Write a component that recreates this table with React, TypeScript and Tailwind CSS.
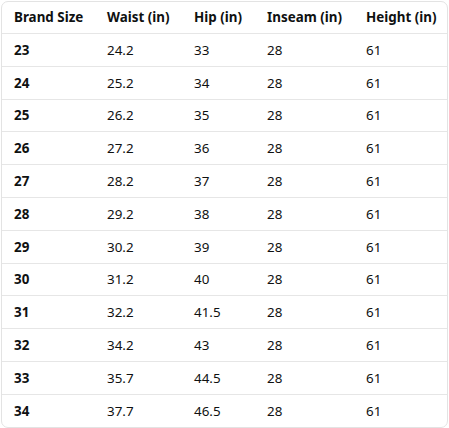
const rows: [string, string, string, string, string][] = [
  ["23", "24.2", "33", "28", "61"],
  ["24", "25.2", "34", "28", "61"],
  ["25", "26.2", "35", "28", "61"],
  ["26", "27.2", "36", "28", "61"],
  ["27", "28.2", "37", "28", "61"],
  ["28", "29.2", "38", "28", "61"],
  ["29", "30.2", "39", "28", "61"],
  ["30", "31.2", "40", "28", "61"],
  ["31", "32.2", "41.5", "28", "61"],
  ["32", "34.2", "43", "28", "61"],
  ["33", "35.7", "44.5", "28", "61"],
  ["34", "37.7", "46.5", "28", "61"],
];

const headers = ["Brand Size", "Waist (in)", "Hip (in)", "Inseam (in)", "Height (in)"];

export default function App() {
  return (
    <div className="w-[449px] h-[428px] bg-white p-px font-['Noto_Sans','Open_Sans',sans-serif] text-[13.4px] text-[#0f1111]">
      <div className="w-[447px] h-[427px] rounded-[7px] border border-[#e3e3e3] overflow-hidden">
        {/* Header */}
        <div className="grid grid-cols-[93px_87px_73px_99px_1fr] h-[32px] items-center border-b border-[#e6e6e6] font-bold">
          {headers.map((h) => (
            <div key={h} className="pl-[12px] whitespace-nowrap">
              {h}
            </div>
          ))}
        </div>

        {/* Rows */}
        {rows.map((r, i) => (
          <div
            key={r[0]}
            className={`grid grid-cols-[93px_87px_73px_99px_1fr] h-[32.8px] items-center ${
              i < rows.length - 1 ? "border-b border-[#e6e6e6]" : ""
            }`}
          >
            {r.map((c, j) => (
              <div key={j} className={`pl-[12px] ${j === 0 ? "font-bold" : ""}`}>
                {c}
              </div>
            ))}
          </div>
        ))}
      </div>
    </div>
  );
}
